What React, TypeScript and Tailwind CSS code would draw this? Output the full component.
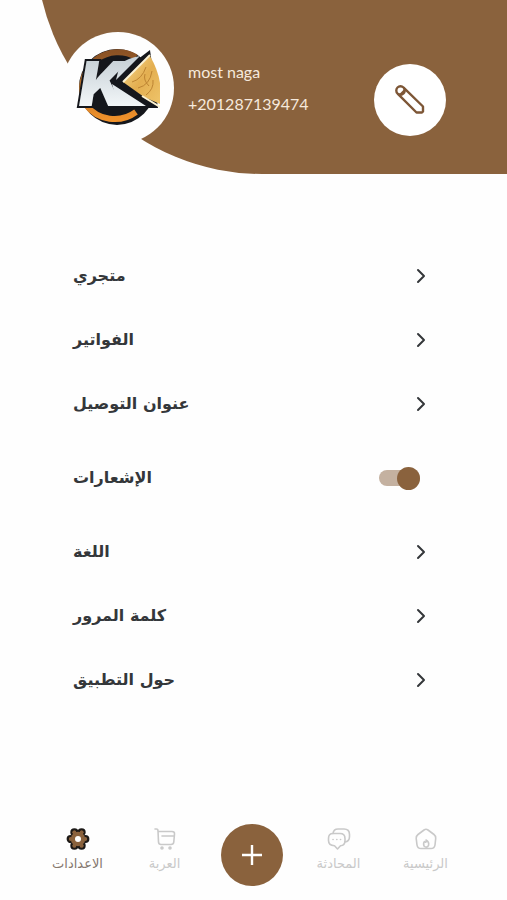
import { useState } from 'react'
import type { ReactNode } from 'react'

interface menuItemInterface {
    id: string
    label: string
    isSwitch?: boolean
}

interface navLinkProps {
    label: string
    active?: boolean
    children: ReactNode
}

const menuItems: menuItemInterface[] = [
    { id: 'store', label: 'متجري' },
    { id: 'invoices', label: 'الفواتير' },
    { id: 'address', label: 'عنوان التوصيل' },
    { id: 'notifications', label: 'الإشعارات', isSwitch: true },
    { id: 'language', label: 'اللغة' },
    { id: 'password', label: 'كلمة المرور' },
    { id: 'about', label: 'حول التطبيق' },
]

function StoreLogo () {
    return (
        <svg viewBox="0 0 84 84" className="size-[84px]" role="img" aria-label="K">
            <defs>
                <linearGradient id="ring" x1="0" y1="0" x2="0" y2="1">
                    <stop offset="0" stopColor="#8a5225" />
                    <stop offset="0.5" stopColor="#b8732e" />
                    <stop offset="1" stopColor="#f0912a" />
                </linearGradient>
                <linearGradient id="silver" gradientUnits="userSpaceOnUse" x1="0" y1="8" x2="0" y2="60">
                    <stop offset="0" stopColor="#c3cdd3" />
                    <stop offset="1" stopColor="#f2f6f8" />
                </linearGradient>
                <linearGradient id="wood" x1="0" y1="0" x2="1" y2="1">
                    <stop offset="0" stopColor="#f8dc92" />
                    <stop offset="0.5" stopColor="#e3ae50" />
                    <stop offset="1" stopColor="#efc56b" />
                </linearGradient>
            </defs>
            <circle cx="41" cy="41" r="38" fill="#15171c" />
            <path d="M60 11A36 36 0 0 0 7 50M10 59A36 36 0 0 0 60 66" fill="none" stroke="url(#ring)" strokeWidth="6" />
            <path d="M40 30 74 4 82 62 50 62 36 40Z" fill="#15171c" />
            <path d="M47 36 74 10Q88 34 84 58L68 51Z" fill="url(#wood)" />
            <path d="M47 36 74 9M66 50 84 61" stroke="#fdf3d3" strokeWidth="2" fill="none" />
            <path d="M56 36q10-3 14-15M62 42q12-3 14-17M70 49q8-6 7-15M69 28q-2 6 4 12" stroke="#bd8432" strokeWidth="1" fill="none" />
            <g fontFamily="Inter, sans-serif" fontWeight="900" fontStyle="italic" fontSize="62" fill="url(#silver)">
                <text x="3" y="60" stroke="#15171c" strokeWidth="4" aria-hidden="true">K</text>
                {/* swooshes that stretch the arms of the initial */}
                <path d="M44 18Q52 12 64 10L40 34ZM36 38 70 60H42Z" />
                <text x="3" y="60">K</text>
            </g>
        </svg>
    )
}

function PencilIcon () {
    return (
        <svg viewBox="0 0 32 32" className="size-8" fill="none" stroke="#7d5636" strokeWidth="2.4" strokeLinejoin="round" aria-hidden="true">
            <circle cx="6.5" cy="6.5" r="4.2" />
            <path d="M3.600 9.600 22.500 28.500H28L29 27.500V22.500L9.600 3.600M5.500 11.500l6-6" />
        </svg>
    )
}

function ChevronIcon () {
    return (
        <svg viewBox="0 0 20 20" className="size-5" fill="none" stroke="#34373a" strokeWidth="2" strokeLinecap="round" strokeLinejoin="round" aria-hidden="true">
            <path d="m7 4 6 6-6 6" />
        </svg>
    )
}

function SettingsIcon () {
    return (
        <svg viewBox="0 0 24 24" className="size-6" aria-hidden="true">
            <g fill="#8a623d" stroke="#1c1917" strokeWidth="2.2">
                <circle cx="8.4" cy="5.3" r="3" />
                <circle cx="15.6" cy="5.3" r="3" />
                <circle cx="19.3" cy="12" r="3" />
                <circle cx="15.6" cy="18.7" r="3" />
                <circle cx="8.4" cy="18.7" r="3" />
                <circle cx="4.7" cy="12" r="3" />
            </g>
            <g fill="#8a623d">
                <circle cx="8.4" cy="5.3" r="1.9" />
                <circle cx="15.6" cy="5.3" r="1.9" />
                <circle cx="15.6" cy="18.7" r="1.9" />
                <circle cx="8.4" cy="18.7" r="1.9" />
                <circle cx="12" cy="12" r="7.2" />
            </g>
            <circle cx="12" cy="12" r="3" fill="#fff" />
        </svg>
    )
}

function CartIcon () {
    return (
        <svg viewBox="0 0 24 24" className="size-6" fill="none" stroke="currentColor" strokeWidth="1.6" strokeLinecap="round" strokeLinejoin="round" aria-hidden="true">
            <path d="M2 2h1.500Q5 2 5 4l.5 11q.2 2.500 2.500 2.500h10q2.500 0 2.800-2.500l.7-8q.2-2.500-2.500-2.500H5M9 9h12" />
            <circle cx="9" cy="21" r="1" />
            <circle cx="17" cy="21" r="1" />
        </svg>
    )
}

function ChatIcon () {
    return (
        <svg viewBox="0 0 24 24" className="size-6" fill="none" stroke="currentColor" strokeWidth="1.6" strokeLinecap="round" strokeLinejoin="round" aria-hidden="true">
            <path d="M6 6.500h7q5 0 5 5v2q0 5-4.500 5.300L10.500 22l-3-3.200Q1.500 18.500 1.500 13.500v-2q0-5 4.500-5Z" />
            <path d="M6 6.500Q6.500 2 11 2h6q5.500 0 5.500 5.500v2q0 5-4.700 5.500" />
            <path d="M6 12.500h.1M9.800 12.500h.1M13.500 12.500h.1" />
        </svg>
    )
}

function HomeIcon () {
    return (
        <svg viewBox="0 0 24 24" className="size-6" fill="none" stroke="currentColor" strokeWidth="1.6" strokeLinecap="round" strokeLinejoin="round" aria-hidden="true">
            <path d="M10 3q2-1.500 4 0l6 4.500q2 1.500 1.700 4L21 18q-.5 3.500-4 3.500H7Q3.500 21.500 3 18l-.8-6.500Q2 9 4 7.500Z" />
            <path d="M12 13q3.500 2 2.500 5.500-2 3-4.500.500Q9 16 10.500 14.500q.5 1 1.500.5.800-1 0-2Z" />
        </svg>
    )
}

function NavLink ({ label, active, children }: navLinkProps) {
    return (
        <a href="#" className={active ? 'flex flex-1 flex-col items-center pt-[3px] text-[#85786e]' : 'flex flex-1 flex-col items-center pt-[3px] text-[#c9c9c9]'}>
            {children}
            <span className="whitespace-nowrap text-[13px] leading-[26px]">{label}</span>
        </a>
    )
}

export default function App () {
    const [notifications, setNotifications] = useState(true)

    return (
        <div lang="ar" className="flex min-h-screen flex-col overflow-hidden bg-[#fefefe] font-['DejaVu_Sans',sans-serif]">
            <header className="overflow-hidden">
                <div className="-mt-[52px] ml-9 flex h-[226px] items-start rounded-bl-[226px] bg-[#8a623d] pt-[84px] pr-[61px] pl-[26px]">
                    <div className="flex size-28 shrink-0 items-center justify-center rounded-full bg-[#fefefe]">
                        <StoreLogo />
                    </div>
                    <div className="ml-3.5 flex-1 pt-6 font-[Lato,sans-serif] text-base leading-8 text-[#f6e9dc]">
                        <p>most naga</p>
                        <p>+201287139474</p>
                    </div>
                    <button aria-label="تعديل" className="mt-8 flex size-[72px] shrink-0 items-center justify-center rounded-full bg-white">
                        <PencilIcon />
                    </button>
                </div>
            </header>

            <main className="flex-1 pt-[70px] pr-[76px] pl-[73px] text-base font-bold text-[#34373a]">
                {
                    menuItems.map((item)=> (
                        item.isSwitch ? (
                            <label key={item.id} className="flex h-[84px] items-center justify-between pr-[11px]">
                                <span>{item.label}</span>
                                <input
                                    type="checkbox"
                                    role="switch"
                                    checked={notifications}
                                    onChange={()=> setNotifications(!notifications)}
                                    className="flex h-4 w-[41px] cursor-pointer appearance-none items-center rounded-full bg-[#c4b1a0] before:size-[23px] before:shrink-0 before:rounded-full before:bg-[#8a623d] checked:justify-end"
                                />
                            </label>
                        ) : (
                            <a key={item.id} href="#" className="flex h-16 items-center justify-between">
                                <span>{item.label}</span>
                                <ChevronIcon />
                            </a>
                        )
                    ))
                }
            </main>

            <nav className="flex h-20 items-start pt-1 pr-[38px] pl-[34px]">
                <NavLink label="الاعدادات" active>
                    <SettingsIcon />
                </NavLink>
                <NavLink label="العربة">
                    <CartIcon />
                </NavLink>
                <div className="flex flex-1 justify-center">
                    <button aria-label="إضافة" className="flex size-[62px] items-center justify-center rounded-full bg-[#8a623d]">
                        <svg viewBox="0 0 24 24" className="size-6" stroke="#fff" strokeWidth="2.4" aria-hidden="true">
                            <path d="M12 2v20M2 12h20" />
                        </svg>
                    </button>
                </div>
                <NavLink label="المحادثة">
                    <ChatIcon />
                </NavLink>
                <NavLink label="الرئيسية">
                    <HomeIcon />
                </NavLink>
            </nav>
        </div>
    )
}
